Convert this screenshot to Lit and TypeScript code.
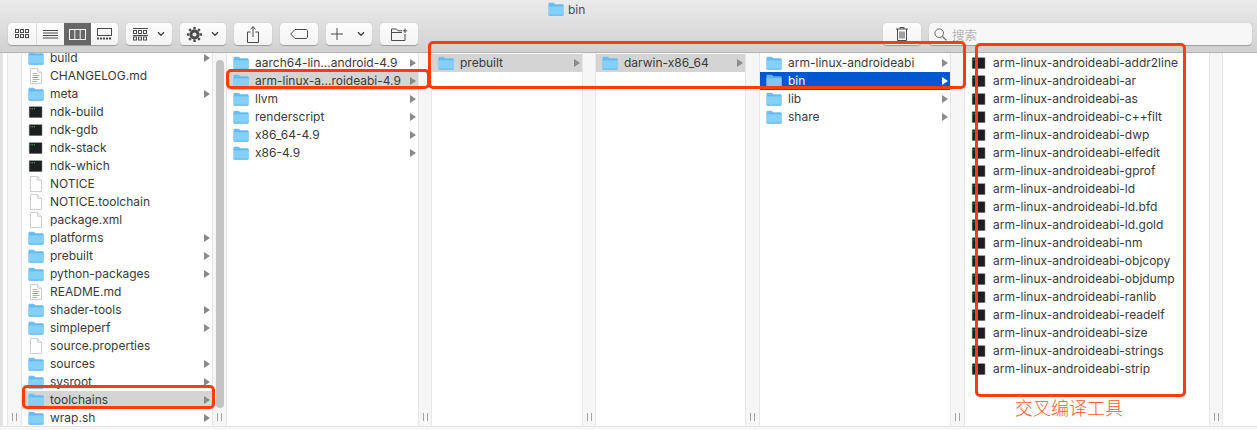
import { LitElement, html, css, svg } from "lit";
import { customElement } from "lit/decorators.js";

type Kind = "f" | "t" | "d" | "m";
type Row = { n: string; k: Kind; hl?: "grey" | "blue" };

const folder = (sel = false) => html`<svg class="ic" width="16" height="14" viewBox="0 0 16 14">
  <path d="M0.5 2.2C.5 1.3 1 .8 1.8 .8H5.3C5.9 .8 6.2 1.1 6.6 1.6L7.2 2.3H14.3C15 2.3 15.6 2.8 15.6 3.6V12C15.6 12.8 15 13.4 14.3 13.4H1.8C1 13.4 .5 12.8 .5 12Z" fill="${sel ? "#5fb4ea" : "#6ac0f4"}"/>
  <path d="M.5 4H15.6V12C15.6 12.8 15 13.4 14.3 13.4H1.8C1 13.4 .5 12.8 .5 12Z" fill="${sel ? "#7cc8f2" : "#85d0f9"}"/>
  <path d="M.5 3.9H15.6" stroke="#55ace6" stroke-width=".6"/>
  <path d="M.5 13.1H15.6" stroke="#4fa3dc" stroke-width=".6"/>
</svg>`;

const terminal = () => html`<svg class="ic term" width="15" height="14" viewBox="0 0 15 14">
  <rect x=".8" y="1.2" width="13.6" height="11.8" rx=".8" fill="#a9a9a9"/>
  <rect x="1.4" y="1.8" width="12.4" height="10.6" fill="#1c1f1f"/>
  <path d="M2.4 3.8H3.4M4.2 3.8H5.2M6 3.8H7" stroke="#4fd06a" stroke-width=".9"/>
</svg>`;

const doc = (lined: boolean) => html`<svg class="docic" width="14" height="16" viewBox="0 0 14 16">
  <path d="M1.5 .5H8.7L12.5 4.3V15.5H1.5Z" fill="#fff" stroke="#cfcfcf"/>
  <path d="M8.7 .5V4.3H12.5" fill="#f0f0f0" stroke="#cfcfcf"/>
  ${lined
    ? svg`<path d="M3.5 5.5H8M3.5 7.5H10.5M3.5 11.5H10.5" stroke="#a9a9a9" stroke-width=".9"/>
          <path d="M3.5 9.5H9" stroke="#7b7fe0" stroke-width=".9"/>
          <path d="M3.5 13.5H8" stroke="#d78a9a" stroke-width=".9"/>`
    : ""}
</svg>`;

const F = (n: string, hl?: Row["hl"]): Row => ({ n, k: "f", hl });
const T = (n: string): Row => ({ n, k: "t" });
const D = (n: string): Row => ({ n, k: "d" });

const col1: Row[] = [
  F("build"), { n: "CHANGELOG.md", k: "m" }, F("meta"), T("ndk-build"), T("ndk-gdb"), T("ndk-stack"), T("ndk-which"),
  D("NOTICE"), D("NOTICE.toolchain"), D("package.xml"), F("platforms"), F("prebuilt"), F("python-packages"),
  { n: "README.md", k: "m" }, F("shader-tools"), F("simpleperf"), D("source.properties"), F("sources"), F("sysroot"),
  F("toolchains", "grey"), F("wrap.sh"),
];
const col2: Row[] = [
  F("aarch64-lin...android-4.9"), F("arm-linux-a...roideabi-4.9", "grey"), F("llvm"), F("renderscript"), F("x86_64-4.9"), F("x86-4.9"),
];
const col3: Row[] = [F("prebuilt", "grey")];
const col4: Row[] = [F("darwin-x86_64", "grey")];
const col5: Row[] = [F("arm-linux-androideabi"), F("bin", "blue"), F("lib"), F("share")];
const col6: Row[] = [
  "addr2line", "ar", "as", "c++filt", "dwp", "elfedit", "gprof", "ld", "ld.bfd", "ld.gold", "nm", "objcopy", "objdump",
  "ranlib", "readelf", "size", "strings", "strip",
].map((s) => T("arm-linux-androideabi-" + s));

const grid = (x: number, y: number, cols: number, rows: number, w: number, h: number, gap: number) => {
  const out = [];
  for (let r = 0; r < rows; r++)
    for (let c = 0; c < cols; c++)
      out.push(svg`<rect x="${x + c * (w + gap)}" y="${y + r * (h + gap)}" width="${w}" height="${h}" fill="none" stroke="currentColor" stroke-width="1"/>`);
  return out;
};

const chevron = html`<svg class="chev" width="8" height="6" viewBox="0 0 8 6"><path d="M1 1.2L4 4.2L7 1.2" fill="none" stroke="#444" stroke-width="1.5"/></svg>`;

@customElement("app-root")
export class AppRoot extends LitElement {
  static styles = css`
    :host { display: block; position: relative; width: 1257px; height: 430px; overflow: hidden; background: #fff;
      font-family: Inter, "Liberation Sans", Arial, sans-serif; font-size: 12px; color: #3a3a3a; }
    .bar { box-sizing: border-box; border-bottom: 1px solid #b4b4b4; height: 53px;
      background: linear-gradient(#ebebeb, #d1d1d1); display: flex; flex-direction: column; }
    .title { height: 18px; padding-left: 548px; display: flex; align-items: center; gap: 4px; color: #4a4a4a; }
    .tools { margin-top: 5px; padding-left: 8px; padding-right: 5px; display: flex; height: 22px; }
    .btn { background: linear-gradient(#fdfdfd, #f3f3f3); border-radius: 4px; box-shadow: 0 0.5px 1px rgba(0,0,0,.28);
      height: 22px; display: flex; align-items: center; justify-content: center; color: #4b4b4b; box-sizing: border-box; flex: none; }
    .seg { display: flex; width: 110px; overflow: hidden; justify-content: flex-start; }
    .seg div { height: 22px; display: flex; align-items: center; justify-content: center; box-sizing: border-box; }
    .seg .a { width: 29px; border-right: 1px solid #dcdcdc; }
    .seg .b { width: 27px; }
    .seg .on { width: 27px; background: #666; color: #f4f4f4; }
    .seg .c { width: 27px; }
    .w46 { width: 46px; margin-left: 8px; gap: 9px; }
    .w38 { width: 38px; margin-left: 8px; }
    .plus { width: 46px; justify-content: flex-start; padding-left: 5px; gap: 14px; }
    .spacer { width: 457px; flex: none; }
    .search { width: 323px; margin-left: 8px; justify-content: flex-start; padding-left: 5px; gap: 5px; color: #b5b5b5; background: #f7f7f7; font-family: "Noto Sans CJK SC", sans-serif; font-size: 12.5px; }
    .browser { display: flex; height: 373px; overflow: hidden; }
    .edge { width: 3px; background: #e2e2e2; flex: none; }
    .pad { width: 4px; flex: none; }
    .col { overflow: hidden; flex: none; padding-top: 1px; box-sizing: border-box; }
    .col.scrolled { padding-top: 0; margin-top: -4px; height: 377px; }
    .strip { flex: none; background: #f6f6f6; border-left: 1px solid #e6e6e6; border-right: 1px solid #e6e6e6; box-sizing: border-box;
      position: relative; display: flex; flex-direction: column; justify-content: flex-end; align-items: center; padding-bottom: 5px; }
    .grip { height: 8px; border-left: 1px solid #a4a4a4; border-right: 1px solid #a4a4a4; box-sizing: content-box; width: 3px; }
    .thumb { position: absolute; left: 3px; top: 7px; width: 8px; height: 348px; border-radius: 4px; background: #c3c3c3; }
    .row { height: 18px; display: flex; align-items: center; padding-left: 6px; white-space: nowrap; }
    .row .ic { flex: none; margin-right: 6px; }
    .row .ic.term { margin-right: 7px; }
    .row .doc { display: flex; flex: none; margin-left: 1px; margin-right: 7px; }
    .row .name { flex: 1; min-width: 0; margin-bottom: 2px; }
    .arrow { flex: none; width: 0; height: 0; border-left: 6px solid #8a8a8a; border-top: 4px solid transparent; border-bottom: 4px solid transparent; margin-right: 2px; }
    .grey { background: #d4d4d4; }
    .blue { background: #0058d0; color: #fff; }
    .blue .arrow { border-left-color: #fff; }
    .end { flex: 1; }
    .foot { height: 4px; border-top: 1px solid #e2e2e2; background: #f7f7f7; box-sizing: border-box; }
    .mark { position: absolute; box-sizing: border-box; border: 3px solid #ff3c0a; border-radius: 5px; pointer-events: none; }
    .m1 { left: 22px; top: 385px; width: 193px; height: 24px; }
    .m2 { left: 226px; top: 69px; width: 204px; height: 20px; }
    .m3 { left: 428px; top: 41px; width: 538px; height: 48px; }
    .m4 { left: 975px; top: 43px; width: 211px; height: 354px; }
    .note { position: absolute; left: 1015px; top: 397px; font-family: "Noto Sans CJK SC", sans-serif; font-size: 18px; line-height: 20px; font-weight: 300; color: #ff5a2c; white-space: nowrap; }
  `;

  private col(rows: Row[], width: number, cls = "") {
    return html`<div class="col ${cls}" style="width:${width}px">
      ${rows.map(
        (r) => html`<div class="row ${r.hl ?? ""}">
          ${r.k === "f" ? folder(r.hl === "blue") : r.k === "t" ? terminal() : html`<span class="doc">${doc(r.k === "m")}</span>`}
          <span class="name">${r.n}</span>
          ${r.k === "f" ? html`<span class="arrow"></span>` : ""}
        </div>`
      )}
    </div>`;
  }

  private strip(width: number, thumb = false) {
    return html`<div class="strip" style="width:${width}px">${thumb ? html`<div class="thumb"></div>` : ""}<div class="grip"></div></div>`;
  }

  render() {
    return html`
      <div class="bar">
        <div class="title">${folder()}<span>bin</span></div>
        <div class="tools">
          <div class="btn seg">
            <div class="a"><svg width="15" height="11" viewBox="0 0 15 11">${grid(.5, .5, 3, 2, 3, 3, 2)}</svg></div>
            <div class="b"><svg width="15" height="11" viewBox="0 0 15 11"><path d="M0 1.5H15M0 4H15M0 6.5H15M0 9H15" stroke="currentColor"/></svg></div>
            <div class="on"><svg width="17" height="11" viewBox="0 0 17 11"><rect x=".5" y=".5" width="16" height="10" fill="none" stroke="currentColor"/><path d="M5.8 0V11M11.2 0V11" stroke="currentColor"/></svg></div>
            <div class="c"><svg width="15" height="12" viewBox="0 0 15 12"><rect x=".5" y=".5" width="14" height="7" fill="none" stroke="currentColor"/><path d="M0 10.5H15" stroke="currentColor" stroke-width="2" stroke-dasharray="2 1"/></svg></div>
          </div>
          <div class="btn w46"><svg width="15" height="13" viewBox="0 0 15 13"><path d="M0 .5H15" stroke="currentColor"/>${grid(.5, 2.5, 3, 1, 3, 3, 2)}<path d="M0 7.5H15" stroke="currentColor"/>${grid(.5, 9, 3, 1, 3, 3, 2)}</svg>${chevron}</div>
          <div class="btn w46"><svg width="15" height="15" viewBox="0 0 15 15"><circle cx="7.5" cy="7.5" r="3.6" fill="none" stroke="#4b4b4b" stroke-width="3"/><path d="M7.5 0V15M0 7.5H15M2.2 2.2L12.8 12.8M12.8 2.2L2.2 12.8" stroke="#4b4b4b" stroke-width="2.4" stroke-dasharray="2.4 10.2 2.4 0"/></svg>${chevron}</div>
          <div class="btn w38"><svg width="12" height="17" viewBox="0 0 12 17"><path d="M3.7 6H.5V16.5H11.5V6H8.3M6 11V.8M3.4 3.2L6 .7L8.6 3.2" fill="none" stroke="currentColor"/></svg></div>
          <div class="btn w38"><svg width="18" height="10" viewBox="0 0 18 10"><path d="M5 .5H16C16.8 .5 17.5 1.2 17.5 2V8C17.5 8.8 16.8 9.5 16 9.5H5L.7 5Z" fill="none" stroke="currentColor"/></svg></div>
          <div class="btn w38 plus"><svg width="12" height="12" viewBox="0 0 12 12"><path d="M6 0V12M0 6H12" stroke="currentColor"/></svg>${chevron}</div>
          <div class="btn w38"><svg width="17" height="13" viewBox="0 0 17 13"><path d="M.5 12.5V1H5.5L7 2.8H11M14 6V12.5H.5M.5 4.5H11" fill="none" stroke="currentColor"/><path d="M14 .5V5M11.8 2.8H16.2" stroke="currentColor"/></svg></div>
          <div class="spacer"></div>
          <div class="btn w38"><svg width="12" height="14" viewBox="0 0 12 14"><path d="M0 2H12M1.5 2V13.5H10.5V2M4 2V.5H8V2M4 4.5V11.5M6 4.5V11.5M8 4.5V11.5" fill="none" stroke="currentColor"/></svg></div>
          <div class="btn search"><svg width="13" height="13" viewBox="0 0 13 13"><circle cx="5.2" cy="5.2" r="4.3" fill="none" stroke="#666"/><path d="M8.4 8.4L12.4 12.4" stroke="#666" stroke-width="1.2"/></svg><span>搜索</span></div>
        </div>
      </div>
      <div class="browser">
        <div class="edge"></div><div class="pad"></div>
        ${this.strip(15)}
        ${this.col(col1, 190, "scrolled")}
        ${this.strip(15, true)}
        ${this.col(col2, 191)}
        ${this.strip(14)}
        ${this.col(col3, 150)}
        ${this.strip(14)}
        ${this.col(col4, 149)}
        ${this.strip(15)}
        ${this.col(col5, 190)}
        ${this.strip(15)}
        ${this.col(col6, 244)}
        ${this.strip(14)}
        <div class="end"></div>
      </div>
      <div class="foot"></div>
      <div class="mark m1"></div>
      <div class="mark m2"></div>
      <div class="mark m3"></div>
      <div class="mark m4"></div>
      <div class="note">交叉编译工具</div>
    `;
  }
}
